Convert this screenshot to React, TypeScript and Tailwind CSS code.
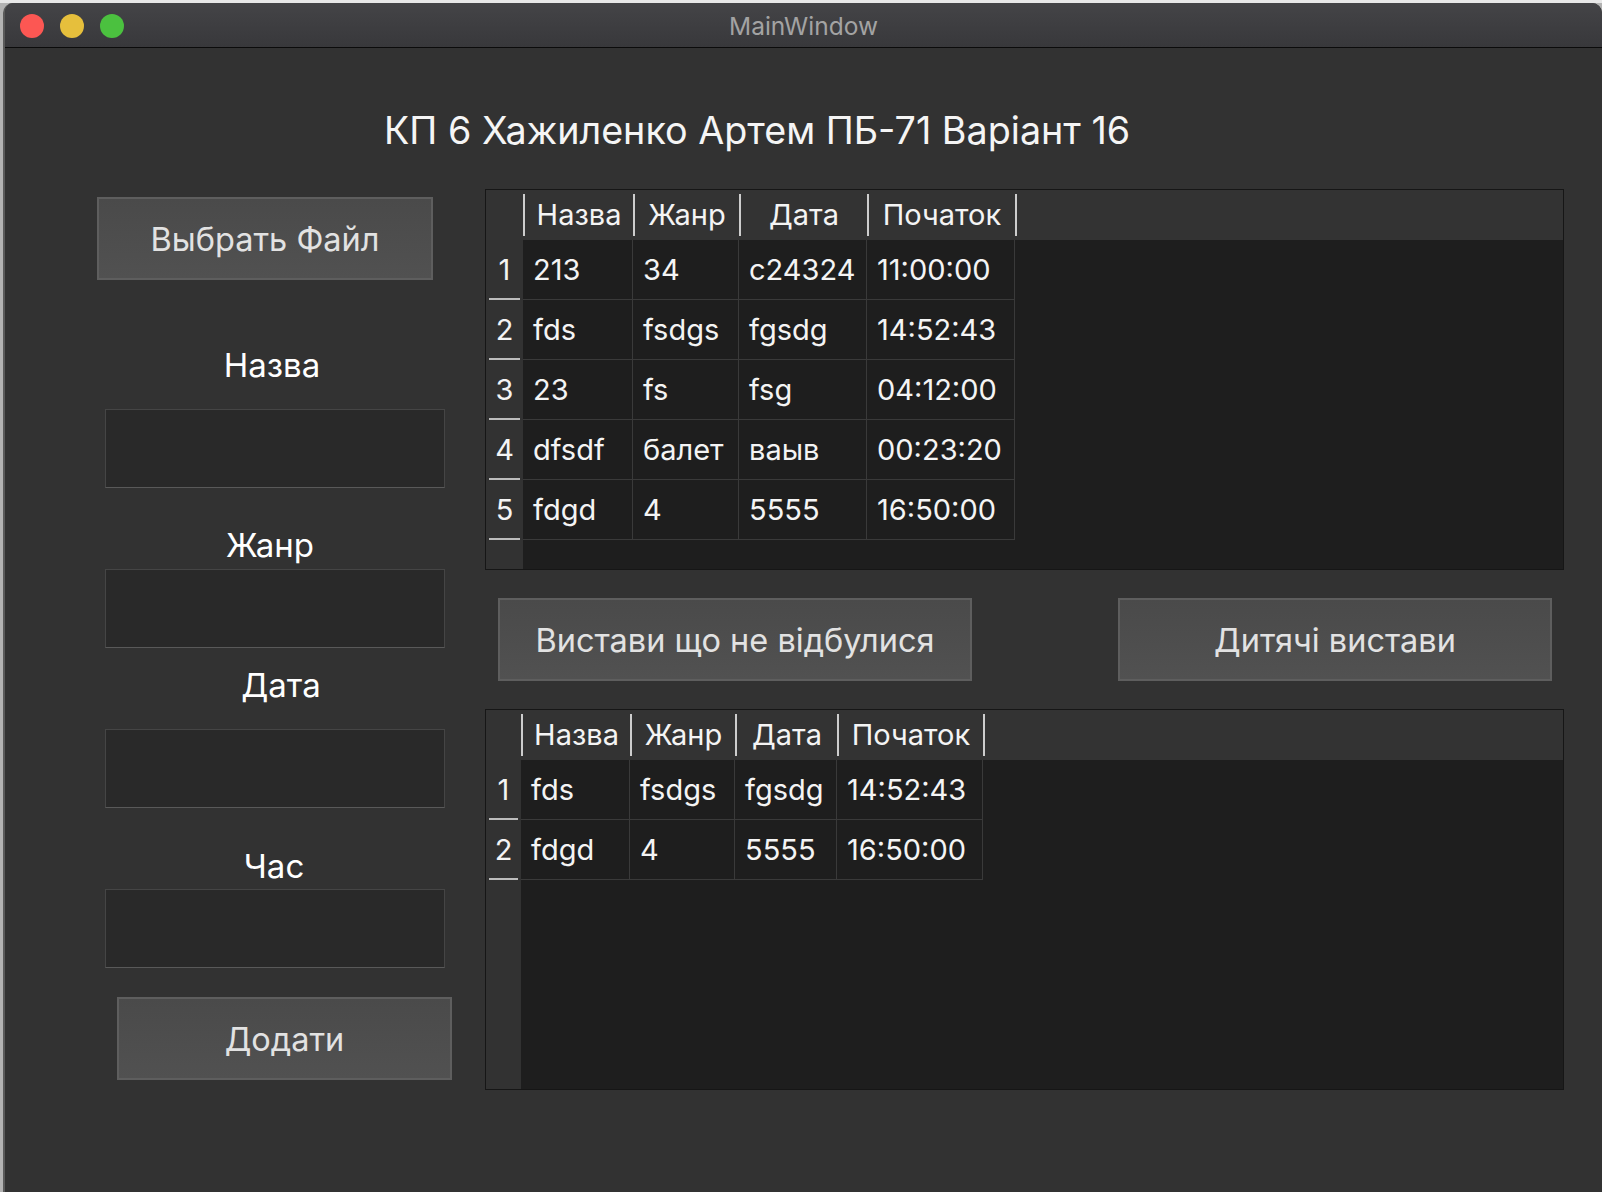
import React from "react";

const font = "font-['Inter','Liberation_Sans',sans-serif]";

const headers = ["Назва", "Жанр", "Дата", "Початок"];

const allShows = [
  ["213", "34", "c24324", "11:00:00"],
  ["fds", "fsdgs", "fgsdg", "14:52:43"],
  ["23", "fs", "fsg", "04:12:00"],
  ["dfsdf", "балет", "ваыв", "00:23:20"],
  ["fdgd", "4", "5555", "16:50:00"],
];

const pastShows = [
  ["fds", "fsdgs", "fgsdg", "14:52:43"],
  ["fdgd", "4", "5555", "16:50:00"],
];

type TableProps = {
  cornerW: string;
  colW: string[];
  rows: string[][];
};

const DataTable: React.FC<TableProps> = ({ cornerW, colW, rows }) => {
  return (
    <div className="flex flex-col w-[1079px] h-[381px] border border-[#161616] bg-[#1e1e1e] overflow-hidden">
      <div className="flex h-[50px] shrink-0 bg-[#333333]">
        <div className={cornerW} />
        {headers.map((h, i) => (
          <div key={h} className={`flex items-center ${colW[i]}`}>
            <div className="w-[2px] h-[42px] bg-[#cdcdcd]" />
            <div className="flex-1 text-center text-[29px] text-[#f4f4f4]">{h}</div>
          </div>
        ))}
        <div className="self-center w-[2px] h-[42px] bg-[#cdcdcd]" />
      </div>
      <div className="flex flex-1">
        <div className={`flex flex-col bg-[#323232] ${cornerW}`}>
          {rows.map((_, i) => (
            <div key={i} className="flex flex-col h-[60px]">
              <div className="flex flex-1 items-center justify-center pt-[1px] text-[29px] text-[#f4f4f4]">{i + 1}</div>
              <div className="h-[2px] mx-[3px] bg-[#bcbcbc]" />
            </div>
          ))}
        </div>
        <div className="flex flex-col">
          {rows.map((r, i) => (
            <div key={i} className="flex h-[60px]">
              {r.map((c, j) => (
                <div
                  key={j}
                  className={`flex items-center pl-[10px] pt-[1px] border-r border-b border-[#3a3a3a] text-[29px] text-[#f4f4f4] ${colW[j]}`}
                >
                  {c}
                </div>
              ))}
            </div>
          ))}
        </div>
      </div>
    </div>
  );
};

const Field: React.FC = () => (
  <input className="block ml-[8px] w-[340px] h-[79px] bg-[#292929] border border-[#454545] border-b-[#595959] outline-none" />
);

const btn =
  "h-[83px] pt-[4px] border-2 border-[#5e5e5e] bg-linear-to-b from-[#4a4a4a] to-[#515151] text-[32.5px] text-[#e2e2e2]";

const App: React.FC = () => {
  return (
    <div className={`h-[1192px] overflow-hidden bg-[#b3b3b3] border-t-[3px] border-[#e8e8e8] pl-[3px] ${font}`}>
      <div className="h-[1189px] bg-[#323232] rounded-t-[10px] border-l-2 border-[#5a5a5a] overflow-hidden">
        {/* title bar */}
        <div className="grid grid-cols-[1fr_auto_1fr] items-center h-[45px] border-b border-[#0b0b0b] bg-linear-to-b from-[#444447] to-[#38383b]">
          <div className="flex items-center gap-[16px] pl-[15px] pt-[1px]">
            <div className="w-[24px] h-[24px] rounded-full bg-[#fc5753]" />
            <div className="w-[24px] h-[24px] rounded-full bg-[#e6bf3c]" />
            <div className="w-[24px] h-[24px] rounded-full bg-[#4bc13f]" />
          </div>
          <div className="pt-[3px] text-[24.5px] text-[#a3a3a3]">MainWindow</div>
          <div />
        </div>

        <div className="mt-[59px] ml-[379px] w-[746px] h-[46px] leading-[46px] text-center whitespace-nowrap text-[37.7px] text-[#f5f5f5]">
          КП 6 Хажиленко Артем ПБ-71 Варіант 16
        </div>

        <div className="flex items-start mt-[36px]">
          {/* left form */}
          <div className="flex flex-col ml-[92px] w-[355px] pt-[8px] text-white">
            <button className={`w-[336px] ${btn}`}>Выбрать Файл</button>
            <div className="mt-[65px] ml-[5px] w-[340px] h-[40px] leading-[40px] text-center text-[33px]">Назва</div>
            <div className="mt-[24px]"><Field /></div>
            <div className="mt-[37px] ml-[3px] w-[340px] h-[40px] leading-[40px] text-center text-[33px]">Жанр</div>
            <div className="mt-[4px]"><Field /></div>
            <div className="mt-[17px] ml-[14px] w-[340px] h-[40px] leading-[40px] text-center text-[33px]">Дата</div>
            <div className="mt-[24px]"><Field /></div>
            <div className="mt-[38px] ml-[7px] w-[340px] h-[40px] leading-[40px] text-center text-[33px]">Час</div>
            <div className="mt-[3px]"><Field /></div>
            <button className={`mt-[29px] ml-[20px] w-[335px] ${btn}`}>Додати</button>
          </div>

          {/* tables */}
          <div className="flex flex-col ml-[33px]">
            <DataTable
              cornerW="w-[37px]"
              colW={["w-[110px]", "w-[106px]", "w-[128px]", "w-[148px]"]}
              rows={allShows}
            />
            <div className="flex mt-[28px] h-[83px]">
              <button className={`ml-[13px] w-[474px] ${btn}`}>Вистави що не відбулися</button>
              <button className={`ml-[146px] w-[434px] ${btn}`}>Дитячі вистави</button>
            </div>
            <div className="mt-[28px]">
              <DataTable
                cornerW="w-[35px]"
                colW={["w-[109px]", "w-[105px]", "w-[102px]", "w-[146px]"]}
                rows={pastShows}
              />
            </div>
          </div>
        </div>
      </div>
    </div>
  );
};

export default App;
